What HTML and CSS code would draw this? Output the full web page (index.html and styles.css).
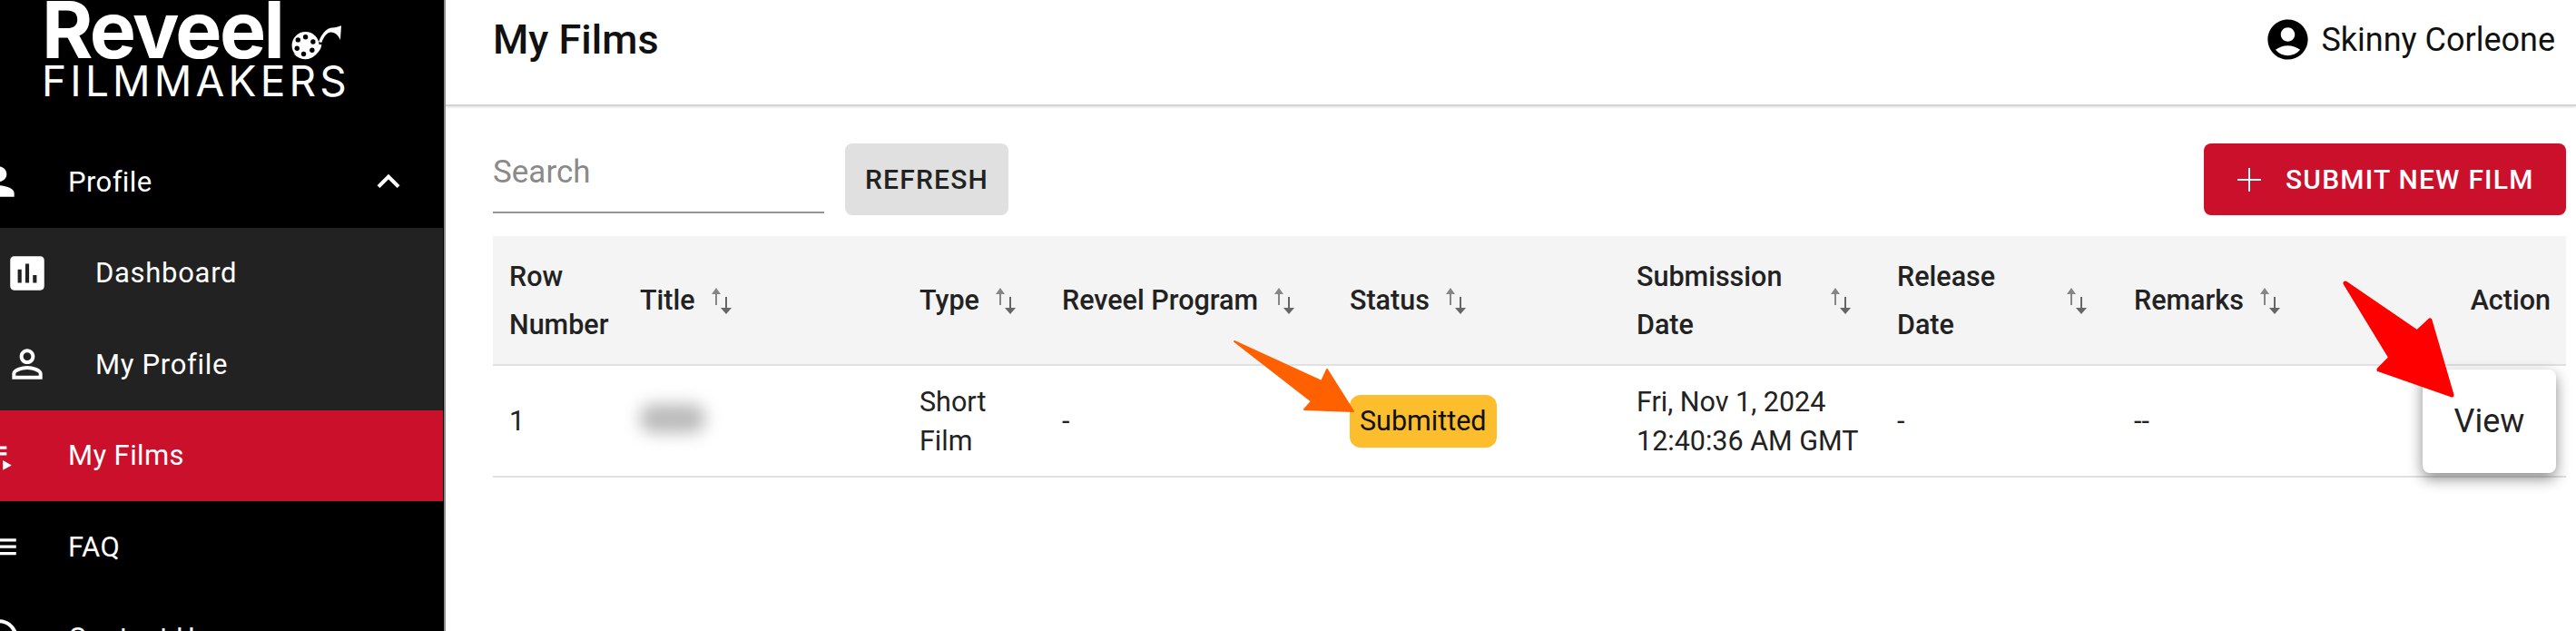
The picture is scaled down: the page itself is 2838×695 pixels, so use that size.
FILE: index.html
```html
<!DOCTYPE html>
<html lang="en">
<head>
  <meta charset="UTF-8">
  <meta name="viewport" content="width=device-width, initial-scale=1.0">
  <title>My Films</title>
  <link rel="stylesheet" href="styles.css">
</head>
<body>
  <aside class="sidebar">
    <div class="logo">
      <div class="logo-top">
        <span class="logo-name">Reveel</span>
        <svg class="logo-reel" viewBox="0 0 54 36">
          <circle cx="16" cy="21" r="14.5" fill="#fff"/>
          <path d="M3 29c4 6 14 8 22 3 5-3 8-8 8-12l-3 0c0 4-3 9-8 11-7 3-14 2-19-2z" fill="#fff"/>
          <g fill="#000">
            <circle cx="16" cy="12" r="2.6"/><circle cx="24" cy="17" r="2.6"/><circle cx="23" cy="26" r="2.6"/>
            <circle cx="14" cy="30" r="2.6"/><circle cx="7" cy="24" r="2.6"/><circle cx="8" cy="15" r="2.6"/>
          </g>
          <path d="M30 17c3-8 8-15 15-15 3 0 6-1 9-2l-1 15c-2-4-5-8-10-8-4 0-7 4-10 11z" fill="#fff"/>
        </svg>
      </div>
      <div class="logo-sub">FILMMAKERS</div>
    </div>
    <nav class="nav">
      <div class="nav-item">
        <svg class="nav-icon" viewBox="0 0 24 24"><path d="M12 12c2.21 0 4-1.79 4-4s-1.79-4-4-4-4 1.79-4 4 1.79 4 4 4zm0 2c-2.67 0-8 1.34-8 4v2h16v-2c0-2.66-5.33-4-8-4z"/></svg>
        <span class="nav-label">Profile</span>
        <svg class="nav-chevron" viewBox="0 0 24 24"><path d="M12 8l-6 6 1.41 1.41L12 10.83l4.59 4.58L18 14z"/></svg>
      </div>
      <div class="nav-group">
        <div class="nav-item sub">
          <svg class="nav-icon" viewBox="0 0 24 24"><path d="M19 3H5c-1.1 0-2 .9-2 2v14c0 1.1.9 2 2 2h14c1.1 0 2-.9 2-2V5c0-1.1-.9-2-2-2zM9 17H7v-7h2v7zm4 0h-2V7h2v10zm4 0h-2v-4h2v4z"/></svg>
          <span class="nav-label">Dashboard</span>
        </div>
        <div class="nav-item sub">
          <svg class="nav-icon" viewBox="0 0 24 24"><path d="M12 5.9c1.16 0 2.1.94 2.1 2.1s-.94 2.1-2.1 2.1S9.9 9.16 9.9 8s.94-2.1 2.1-2.1m0 9c2.97 0 6.1 1.46 6.1 2.1v1.1H5.9V17c0-.64 3.13-2.1 6.1-2.1M12 4C9.79 4 8 5.79 8 8s1.79 4 4 4 4-1.79 4-4-1.79-4-4-4zm0 9c-2.67 0-8 1.34-8 4v3h16v-3c0-2.66-5.33-4-8-4z"/></svg>
          <span class="nav-label">My Profile</span>
        </div>
      </div>
      <div class="nav-item active">
        <svg class="nav-icon" viewBox="0 0 24 24"><path d="M2 7h14v1.5H2zM2 10.2h14v1.5H2zM2 13.4h10.5v1.5H2zM14 14.4v5.2l4.6-2.6z"/></svg>
        <span class="nav-label">My Films</span>
      </div>
      <div class="nav-item">
        <svg class="nav-icon" viewBox="0 0 24 24"><path d="M3 7.8h18v1.5H3zM3 11.3h18v1.5H3zM3 14.9h18v1.5H3z"/></svg>
        <span class="nav-label">FAQ</span>
      </div>
      <div class="nav-item">
        <svg class="nav-icon" viewBox="0 0 24 24"><path d="M12 2C6.48 2 2 6.48 2 12s4.48 10 10 10 10-4.48 10-10S17.52 2 12 2zm0 18c-4.41 0-8-3.59-8-8s3.59-8 8-8 8 3.59 8 8-3.59 8-8 8z"/></svg>
        <span class="nav-label">Contact Us</span>
      </div>
    </nav>
  </aside>

  <main class="main">
    <header class="topbar">
      <h1 class="page-title">My Films</h1>
      <div class="user">
        <svg class="user-icon" viewBox="0 0 24 24"><path d="M12 2C6.48 2 2 6.48 2 12s4.48 10 10 10 10-4.48 10-10S17.52 2 12 2zm0 4c1.93 0 3.5 1.57 3.5 3.5S13.93 13 12 13s-3.5-1.57-3.5-3.5S10.07 6 12 6zm0 14c-2.03 0-4.43-.82-6.14-2.88C7.55 15.8 9.68 15 12 15s4.45.8 6.14 2.12C16.43 19.18 14.03 20 12 20z"/></svg>
        <span>Skinny Corleone</span>
      </div>
    </header>

    <section class="content">
      <div class="toolbar">
        <div class="search">Search</div>
        <button class="btn btn-grey">REFRESH</button>
        <button class="btn btn-red">
          <svg class="plus" viewBox="0 0 26 26"><path d="M12 0h2v12h12v2H14v12h-2V14H0v-2h12z"/></svg>
          SUBMIT NEW FILM
        </button>
      </div>

      <table class="films">
        <colgroup>
          <col class="c-row"><col class="c-title"><col class="c-type"><col class="c-program">
          <col class="c-status"><col class="c-date"><col class="c-release"><col class="c-remarks">
        </colgroup>
        <thead>
          <tr>
            <th>Row<br>Number</th>
            <th><div class="th-sort">Title <svg class="sort" viewBox="0 0 22 30"><use href="#sort-arrows"/></svg></div></th>
            <th><div class="th-sort">Type <svg class="sort" viewBox="0 0 22 30"><use href="#sort-arrows"/></svg></div></th>
            <th><div class="th-sort">Reveel Program <svg class="sort" viewBox="0 0 22 30"><use href="#sort-arrows"/></svg></div></th>
            <th><div class="th-sort">Status <svg class="sort" viewBox="0 0 22 30"><use href="#sort-arrows"/></svg></div></th>
            <th><div class="th-sort"><span class="th-date">Submission<br>Date</span> <svg class="sort" viewBox="0 0 22 30"><use href="#sort-arrows"/></svg></div></th>
            <th><div class="th-sort"><span class="th-release">Release<br>Date</span> <svg class="sort" viewBox="0 0 22 30"><use href="#sort-arrows"/></svg></div></th>
            <th><div class="th-sort"><span class="th-remarks">Remarks</span> <svg class="sort" viewBox="0 0 22 30"><use href="#sort-arrows"/></svg><span class="th-action">Action</span></div></th>
          </tr>
        </thead>
        <tbody>
          <tr>
            <td>1</td>
            <td><span class="blurred"></span></td>
            <td>Short<br>Film</td>
            <td>-</td>
            <td><span class="badge">Submitted</span></td>
            <td>Fri, Nov 1, 2024<br>12:40:36 AM GMT</td>
            <td>-</td>
            <td>
              <div class="last-cell">
                <span>--</span>
                <button class="btn-view">View</button>
              </div>
            </td>
          </tr>
        </tbody>
      </table>
    </section>
  </main>

  <!-- arrows drawn on top of the screenshot -->
  <svg class="annotations" viewBox="0 0 2838 695">
    <path d="M1360 376L1456 420L1462 407L1491 453L1437 451L1445 442Z" fill="#ff6000" stroke="#ff6000" stroke-width="2" stroke-linejoin="round"/>
    <path d="M2584 312L2663 366L2677 353L2701 435L2621 407L2634 394Z" fill="#ff0000" stroke="#ff0000" stroke-width="5" stroke-linejoin="round"/>
  </svg>

  <svg class="defs" width="0" height="0">
    <defs>
      <g id="sort-arrows">
        <path d="M5 1l5 7H6v12H4V8H0z" fill="#868686"/>
        <path d="M15 11h2v12h5l-6 7-6-7h5z" fill="#666"/>
      </g>
    </defs>
  </svg>
</body>
</html>
```

FILE: styles.css
```css
* { box-sizing: border-box; }
html, body { height: 100%; }
body { margin: 0; height: 695px; overflow: hidden; display: flex; position: relative; font-family: Roboto, sans-serif; background: #fff; color: #222; }

.sidebar { width: 491px; flex: none; height: 695px; overflow: hidden; background: #000; color: #fff; border-right: 2px solid #8c8c8c; }
.logo { height: 150px; padding-left: 46px; font-family: Inter, sans-serif; }
.logo-top { display: flex; align-items: flex-end; height: 66px; }
.logo-name { font-size: 86px; font-weight: 700; line-height: 66px; letter-spacing: -2.6px; }
.logo-reel { width: 56px; height: 38px; margin-left: 9px; fill: #fff; }
.logo-sub { font-size: 46px; line-height: 40px; letter-spacing: 4.2px; margin-top: 3px; white-space: nowrap; }

.nav-item { display: flex; align-items: center; height: 100.5px; padding-left: 0; font-size: 31px; letter-spacing: 0.4px; }
.nav-icon { width: 50px; height: 50px; flex: none; fill: #fff; margin-left: -26px; margin-right: 51px; }
.nav-chevron { width: 50px; height: 50px; fill: #fff; margin-left: auto; margin-right: 36px; }
.nav-group { background: #222; margin-right: 1px; }
.nav-item.sub { letter-spacing: 0.7px; }
.nav-item.sub .nav-icon { margin-left: 5px; margin-right: 50px; }
.nav-item.active { background: #cb102c; margin-right: 1px; }

.main { flex: 1; min-width: 0; height: 695px; overflow: hidden; }
.topbar { height: 117px; display: flex; align-items: center; justify-content: space-between; padding: 0 23px 28px 52px; border-bottom: 2px solid #d4d4d4; box-shadow: 0 1px 3px #0002; }
.page-title { margin: 0; font-size: 45px; font-weight: 500; color: #111; }
.user { display: flex; align-items: center; gap: 10px; font-size: 36px; color: #111; }
.user-icon { width: 53px; height: 53px; fill: #000; }

.content { padding: 41px 11px 0 52px; }
.toolbar { display: flex; align-items: center; height: 79px; }
.search { width: 365px; height: 75px; margin-right: 23px; font-size: 35px; line-height: 60px; color: #8a8a8a; border-bottom: 2px solid #949494; }
.btn { height: 79px; border: 0; border-radius: 8px; font-family: Roboto, sans-serif; font-size: 30px; font-weight: 500; letter-spacing: 1.2px; display: inline-flex; align-items: center; }
.btn-grey { width: 180px; justify-content: center; background: #e0e0e0; color: #222; }
.btn-red { width: 399px; margin-left: auto; padding-left: 37px; gap: 27px; background: #cb102c; color: #fff; }
.plus { width: 26px; height: 26px; fill: #fff; }

.films { width: 2284px; margin-top: 23px; border-collapse: collapse; table-layout: fixed; }
.c-row { width: 144px; }
.c-title { width: 308px; }
.c-type { width: 157px; }
.c-program { width: 317px; }
.c-status { width: 316px; }
.c-date { width: 287px; }
.c-release { width: 261px; }
.c-remarks { width: 494px; }
.films th { height: 142px; padding: 0 18px; background: #f4f4f4; text-align: left; font-size: 30.5px; font-weight: 500; line-height: 53px; color: #222; border-bottom: 2px solid #e0e0e0; }
.films td { height: 123px; padding: 0 18px; font-size: 30.5px; line-height: 43px; border-bottom: 2px solid #e0e0e0; }
.th-sort { display: flex; align-items: center; gap: 18px; white-space: nowrap; }
.sort { width: 22px; height: 30px; flex: none; }
.th-date { width: 196px; }
.th-release { width: 169px; }
.th-action { margin-left: auto; margin-right: -1px; }
.blurred { display: inline-block; width: 72px; height: 32px; margin-bottom: 8px; vertical-align: middle; background: #bbb; border-radius: 14px; filter: blur(9px); }
.badge { display: inline-block; padding: 7px 11px 8px 11px; background: #fcbe2c; border-radius: 12px; color: #111; }
.last-cell { display: flex; align-items: center; justify-content: space-between; margin-right: -7px; }
.btn-view { width: 147px; height: 114px; border: 0; border-radius: 8px; background: #fff; font-family: Roboto, sans-serif; font-size: 36px; color: #222; box-shadow: 0 6px 16px #0007; }

.annotations { position: absolute; left: 0; top: 0; width: 2838px; height: 695px; pointer-events: none; }
.defs { position: absolute; }
```
